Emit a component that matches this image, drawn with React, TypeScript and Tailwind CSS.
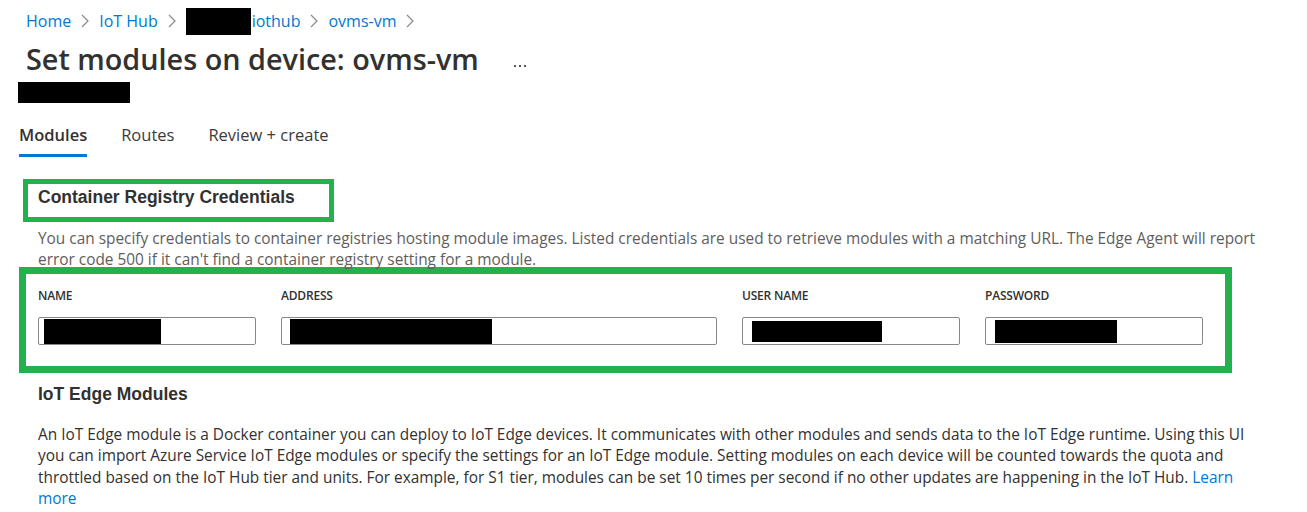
import React from 'react';

const GREEN = 'border-[#22b14c]';

function Chevron() {
  return (
    <svg width="8" height="14" viewBox="0 0 8 14" fill="none" className="mx-[10px] shrink-0">
      <path d="M1 1l6 6-6 6" stroke="#8a8886" strokeWidth="1.2" />
    </svg>
  );
}

function Breadcrumb() {
  return (
    <nav className="flex h-[39px] items-center pl-[26px] pt-[3px] text-[16px] text-[#0078d4]">
      <span>Home</span>
      <Chevron />
      <span>IoT Hub</span>
      <Chevron />
      <span className="flex items-center">
        <span className="inline-block h-[27px] w-[65px] bg-black" />
        <span className="ml-px">iothub</span>
      </span>
      <Chevron />
      <span>ovms-vm</span>
      <Chevron />
    </nav>
  );
}

function Tabs() {
  const tabs = ['Modules', 'Routes', 'Review + create'];
  return (
    <div className="ml-[19px] mt-[21px] flex gap-[34px] text-[16.5px] leading-[22px]">
      {tabs.map((t, i) => (
        <div key={t} className="flex flex-col">
          <span className={i === 0 ? 'font-semibold text-[#323130]' : 'text-[#3b3a39]'}>{t}</span>
          <span className={`mt-[8px] h-[3px] w-full ${i === 0 ? 'bg-[#0078d4]' : 'bg-transparent'}`} />
        </div>
      ))}
    </div>
  );
}

// label, column width, redaction offset / width / height
const fields = [
  { label: 'NAME', w: 'w-[218px]', ml: 'ml-[5px]', rw: 'w-[117px]', rh: 'h-[25px]' },
  { label: 'ADDRESS', w: 'w-[436px]', ml: 'ml-[8px]', rw: 'w-[202px]', rh: 'h-[25px]' },
  { label: 'USER NAME', w: 'w-[218px]', ml: 'ml-[9px]', rw: 'w-[130px]', rh: 'h-[21px]' },
  { label: 'PASSWORD', w: 'w-[218px]', ml: 'ml-[9px]', rw: 'w-[122px]', rh: 'h-[23px]' },
];

function Credentials() {
  return (
    <div className={`-mt-[3px] ml-[19px] w-[1213px] border-[7px] ${GREEN} pb-[21px] pl-[12px] pt-[14px]`}>
      <div className="flex gap-[25px]">
        {fields.map((f) => (
          <div key={f.label} className={`flex flex-col ${f.w}`}>
            <span className="text-[12px] font-semibold leading-[16px] tracking-[-0.2px] text-[#323130]">
              {f.label}
            </span>
            <div className="mt-[13px] flex h-[28px] items-center rounded-[2px] border border-[#8a8886] bg-white">
              <span className={`inline-block bg-black ${f.ml} ${f.rw} ${f.rh}`} />
            </div>
          </div>
        ))}
      </div>
    </div>
  );
}

export default function App() {
  return (
    <div className="min-h-[512px] w-[1307px] overflow-hidden bg-white font-['Open_Sans',sans-serif] text-[#323130]">
      <Breadcrumb />

      <div className="ml-[26px] flex h-[40px] items-center">
        <h1 className="whitespace-nowrap text-[28.8px] font-semibold leading-[40px] text-[#323130]">
          Set modules on device: ovms-vm
        </h1>
        <svg width="14" height="4" viewBox="0 0 14 4" className="ml-[34px] mt-[14px]">
          <circle cx="2" cy="2" r="1.1" fill="#323130" />
          <circle cx="7" cy="2" r="1.1" fill="#323130" />
          <circle cx="12" cy="2" r="1.1" fill="#323130" />
        </svg>
      </div>
      <div className="ml-[18px] mt-[3px] h-[21px] w-[112px] bg-black" />

      <Tabs />

      <div className={`ml-[23px] mt-[22px] w-[311px] border-[5px] ${GREEN} pb-[6px] pl-[10px]`}>
        <h2 className="font-['Liberation_Sans',Arial,sans-serif] text-[17.5px] font-bold leading-[27px] text-[#323130]">
          Container Registry Credentials
        </h2>
      </div>

      <p className="ml-[38px] mt-[6px] whitespace-nowrap text-[15.4px] leading-[21px] text-[#605e5c]">
        You can specify credentials to container registries hosting module images. Listed credentials are used to
        retrieve modules with a matching URL. The Edge Agent will report
        <br />
        error code 500 if it can't find a container registry setting for a module.
      </p>

      <Credentials />

      <h2 className="ml-[38px] mt-[9px] font-['Liberation_Sans',Arial,sans-serif] text-[17.5px] font-bold leading-[24px] text-[#323130]">
        IoT Edge Modules
      </h2>

      <p className="ml-[38px] mt-[18px] whitespace-nowrap text-[15.4px] leading-[21.33px] text-[#323130]">
        An IoT Edge module is a Docker container you can deploy to IoT Edge devices. It communicates with other modules
        and sends data to the IoT Edge runtime. Using this UI
        <br />
        you can import Azure Service IoT Edge modules or specify the settings for an IoT Edge module. Setting modules on
        each device will be counted towards the quota and
        <br />
        throttled based on the IoT Hub tier and units. For example, for S1 tier, modules can be set 10 times per second if
        no other updates are happening in the IoT Hub. <a className="text-[#0078d4]">Learn</a>
        <br />
        <a className="text-[#0078d4]">more</a>
      </p>
    </div>
  );
}
